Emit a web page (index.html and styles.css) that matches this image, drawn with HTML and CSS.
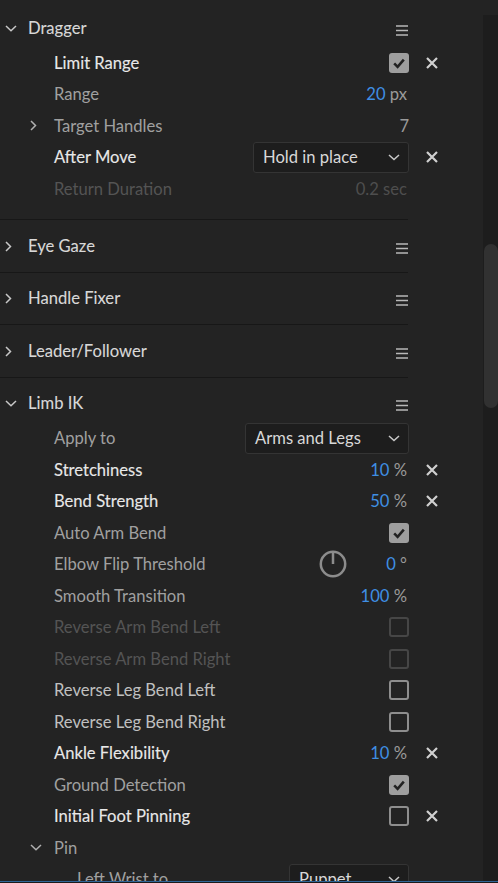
FILE: index.html
```html
<!DOCTYPE html>
<html>
<head>
<meta charset="utf-8">
<title>Properties</title>
<link rel="stylesheet" href="styles.css">
</head>
<body>
<div class="window">
  <div class="content">
    <section class="group open first">
      <div class="ghead">
        <span class="gchev"><svg width="12" height="7" viewBox="0 0 12 7"><path d="M1 1 L6 5.8 L11 1" fill="none" stroke="#c8c8c8" stroke-width="1.5"/></svg></span>
        <span class="gtitle">Dragger</span>
        <span class="menu"><svg width="12" height="11" viewBox="0 0 12 11"><path d="M0 1 H12 M0 5.5 H12 M0 10 H12" stroke="#b8b8b8" stroke-width="1.5"/></svg></span>
      </div>
      <div class="row"><span class="rchev"></span><span class="label bright">Limit Range</span><span class="ctl"><span class="cb checked"><svg width="20" height="20" viewBox="0 0 20 20"><path d="M5.2 10.4 L8.6 13.8 L14.8 6.6" fill="none" stroke="#222" stroke-width="2.6"/></svg></span></span><span class="x"><svg width="12" height="12" viewBox="0 0 12 12"><path d="M1 1 L11 11 M11 1 L1 11" stroke="#d0d0d0" stroke-width="2.2"/></svg></span></div>
      <div class="row"><span class="rchev"></span><span class="label mid">Range</span><span class="ctl"><span class="val"><b>20</b> px</span></span><span class="x"></span></div>
      <div class="row"><span class="rchev"><svg width="7" height="11" viewBox="0 0 7 11"><path d="M1 1 L5.5 5.5 L1 10" fill="none" stroke="#b0b0b0" stroke-width="1.5"/></svg></span><span class="label mid">Target Handles</span><span class="ctl"><span class="val plain">7</span></span><span class="x"></span></div>
      <div class="row"><span class="rchev"></span><span class="label bright">After Move</span><span class="ctl"><span class="dd w156"><span>Hold in place</span><svg width="12" height="7" viewBox="0 0 12 7"><path d="M1 1 L6 5.6 L11 1" fill="none" stroke="#c8c8c8" stroke-width="1.5"/></svg></span></span><span class="x"><svg width="12" height="12" viewBox="0 0 12 12"><path d="M1 1 L11 11 M11 1 L1 11" stroke="#d0d0d0" stroke-width="2.2"/></svg></span></div>
      <div class="row"><span class="rchev"></span><span class="label off">Return Duration</span><span class="ctl"><span class="val off">0.2 sec</span></span><span class="x"></span></div>
    </section>
    <div class="sep"></div>

    <section class="group">
      <div class="ghead">
        <span class="gchev"><svg width="7" height="11" viewBox="0 0 7 11"><path d="M1 1 L5.5 5.5 L1 10" fill="none" stroke="#c8c8c8" stroke-width="1.5"/></svg></span>
        <span class="gtitle">Eye Gaze</span>
        <span class="menu"><svg width="12" height="11" viewBox="0 0 12 11"><path d="M0 1 H12 M0 5.5 H12 M0 10 H12" stroke="#b8b8b8" stroke-width="1.5"/></svg></span>
      </div>
    </section>
    <div class="sep"></div>

    <section class="group">
      <div class="ghead">
        <span class="gchev"><svg width="7" height="11" viewBox="0 0 7 11"><path d="M1 1 L5.5 5.5 L1 10" fill="none" stroke="#c8c8c8" stroke-width="1.5"/></svg></span>
        <span class="gtitle">Handle Fixer</span>
        <span class="menu"><svg width="12" height="11" viewBox="0 0 12 11"><path d="M0 1 H12 M0 5.5 H12 M0 10 H12" stroke="#b8b8b8" stroke-width="1.5"/></svg></span>
      </div>
    </section>
    <div class="sep"></div>

    <section class="group">
      <div class="ghead">
        <span class="gchev"><svg width="7" height="11" viewBox="0 0 7 11"><path d="M1 1 L5.5 5.5 L1 10" fill="none" stroke="#c8c8c8" stroke-width="1.5"/></svg></span>
        <span class="gtitle">Leader/Follower</span>
        <span class="menu"><svg width="12" height="11" viewBox="0 0 12 11"><path d="M0 1 H12 M0 5.5 H12 M0 10 H12" stroke="#b8b8b8" stroke-width="1.5"/></svg></span>
      </div>
    </section>
    <div class="sep"></div>

    <section class="group open">
      <div class="ghead">
        <span class="gchev"><svg width="12" height="7" viewBox="0 0 12 7"><path d="M1 1 L6 5.8 L11 1" fill="none" stroke="#c8c8c8" stroke-width="1.5"/></svg></span>
        <span class="gtitle">Limb IK</span>
        <span class="menu"><svg width="12" height="11" viewBox="0 0 12 11"><path d="M0 1 H12 M0 5.5 H12 M0 10 H12" stroke="#b8b8b8" stroke-width="1.5"/></svg></span>
      </div>
      <div class="row"><span class="rchev"></span><span class="label mid">Apply to</span><span class="ctl"><span class="dd w164"><span>Arms and Legs</span><svg width="12" height="7" viewBox="0 0 12 7"><path d="M1 1 L6 5.6 L11 1" fill="none" stroke="#c8c8c8" stroke-width="1.5"/></svg></span></span><span class="x"></span></div>
      <div class="row"><span class="rchev"></span><span class="label bright">Stretchiness</span><span class="ctl"><span class="val"><b>10</b> %</span></span><span class="x"><svg width="12" height="12" viewBox="0 0 12 12"><path d="M1 1 L11 11 M11 1 L1 11" stroke="#d0d0d0" stroke-width="2.2"/></svg></span></div>
      <div class="row"><span class="rchev"></span><span class="label bright">Bend Strength</span><span class="ctl"><span class="val"><b>50</b> %</span></span><span class="x"><svg width="12" height="12" viewBox="0 0 12 12"><path d="M1 1 L11 11 M11 1 L1 11" stroke="#d0d0d0" stroke-width="2.2"/></svg></span></div>
      <div class="row"><span class="rchev"></span><span class="label mid">Auto Arm Bend</span><span class="ctl"><span class="cb checked"><svg width="20" height="20" viewBox="0 0 20 20"><path d="M5.2 10.4 L8.6 13.8 L14.8 6.6" fill="none" stroke="#222" stroke-width="2.6"/></svg></span></span><span class="x"></span></div>
      <div class="row"><span class="rchev"></span><span class="label mid">Elbow Flip Threshold</span><span class="ctl"><span class="dial"><svg width="28" height="28" viewBox="0 0 28 28"><circle cx="14" cy="14" r="12.2" fill="none" stroke="#8c8c8c" stroke-width="2.5"/><path d="M14 14 V3" stroke="#8c8c8c" stroke-width="2.5"/></svg></span><span class="val wide"><b>0</b> °</span></span><span class="x"></span></div>
      <div class="row"><span class="rchev"></span><span class="label mid">Smooth Transition</span><span class="ctl"><span class="val"><b>100</b> %</span></span><span class="x"></span></div>
      <div class="row"><span class="rchev"></span><span class="label off">Reverse Arm Bend Left</span><span class="ctl"><span class="cb dis"></span></span><span class="x"></span></div>
      <div class="row"><span class="rchev"></span><span class="label off">Reverse Arm Bend Right</span><span class="ctl"><span class="cb dis"></span></span><span class="x"></span></div>
      <div class="row"><span class="rchev"></span><span class="label lite">Reverse Leg Bend Left</span><span class="ctl"><span class="cb"></span></span><span class="x"></span></div>
      <div class="row"><span class="rchev"></span><span class="label lite">Reverse Leg Bend Right</span><span class="ctl"><span class="cb"></span></span><span class="x"></span></div>
      <div class="row"><span class="rchev"></span><span class="label bright">Ankle Flexibility</span><span class="ctl"><span class="val"><b>10</b> %</span></span><span class="x"><svg width="12" height="12" viewBox="0 0 12 12"><path d="M1 1 L11 11 M11 1 L1 11" stroke="#d0d0d0" stroke-width="2.2"/></svg></span></div>
      <div class="row"><span class="rchev"></span><span class="label mid">Ground Detection</span><span class="ctl"><span class="cb checked"><svg width="20" height="20" viewBox="0 0 20 20"><path d="M5.2 10.4 L8.6 13.8 L14.8 6.6" fill="none" stroke="#222" stroke-width="2.6"/></svg></span></span><span class="x"></span></div>
      <div class="row"><span class="rchev"></span><span class="label bright">Initial Foot Pinning</span><span class="ctl"><span class="cb"></span></span><span class="x"><svg width="12" height="12" viewBox="0 0 12 12"><path d="M1 1 L11 11 M11 1 L1 11" stroke="#d0d0d0" stroke-width="2.2"/></svg></span></div>
      <div class="row"><span class="rchev"><svg width="12" height="7" viewBox="0 0 12 7"><path d="M1 1 L6 5.8 L11 1" fill="none" stroke="#b0b0b0" stroke-width="1.5"/></svg></span><span class="label mid">Pin</span><span class="ctl"></span><span class="x"></span></div>
      <div class="row nested"><span class="rchev"></span><span class="label mid">Left Wrist to</span><span class="ctl"><span class="dd w120"><span>Puppet</span><svg width="12" height="7" viewBox="0 0 12 7"><path d="M1 1 L6 5.6 L11 1" fill="none" stroke="#c8c8c8" stroke-width="1.5"/></svg></span></span><span class="x"></span></div>
    </section>
  </div>
  <div class="track"><div class="thumb"></div></div>
</div>
<div class="edge"></div>
<div class="edge-under"></div>
</body>
</html>
```

FILE: styles.css
```css
* { box-sizing: border-box; }
html, body {
  margin: 0;
  padding: 0;
  background: #232323;
}
body {
  width: 498px;
  height: 883px;
  overflow: hidden;
  font-family: Lato, "Open Sans", sans-serif;
  font-size: 16.6px;
  color: #d6d6d6;
}
.window {
  display: flex;
  height: 881px;
  overflow: hidden;
}
.content {
  flex: 0 0 483px;
  padding-top: 2px;
}
.track {
  flex: 0 0 15px;
  margin-top: 15px;
  background: #1d1d1d;
  padding-left: 1px;
}
.thumb {
  margin-top: 229px;
  height: 164px;
  background: #313131;
  border-radius: 7px;
}
.edge {
  height: 1px;
  background: #2f6596;
}
.edge-under {
  height: 1px;
  background: #1b1b1b;
}

.group { padding-bottom: 6.5px; }
.group.open.first { padding-bottom: 14.5px; }
.sep {
  width: 408px;
  height: 1px;
  background: #171717;
}
.ghead {
  height: 45px;
  padding-top: 6px;
  padding-right: 75px;
  display: flex;
  align-items: center;
}
.gchev {
  flex: 0 0 28px;
  padding-left: 5px;
  display: flex;
  align-items: center;
  margin-top: 1px;
}
.gchev svg { display: block; }
.gtitle {
  flex: 1;
  color: #d8d8d8;
  -webkit-text-stroke: 0.1px #d8d8d8;
}
.menu {
  display: flex;
  margin-top: 5px;
}
.menu svg { display: block; }

.row {
  height: 31.5px;
  display: grid;
  grid-template-columns: 26px 1fr auto 46px;
  align-items: center;
  padding-left: 28px;
  padding-right: 28px;
}
.row.nested { padding-left: 51px; }
.rchev {
  display: flex;
  align-items: center;
  padding-left: 2px;
}
.rchev svg { display: block; }
.label {
  white-space: nowrap;
}
.label.bright {
  color: #e8e8e8;
  -webkit-text-stroke: 0.12px #e8e8e8;
}
.label.mid { color: #a0a0a0; }
.label.lite { color: #c0c0c0; }
.label.off { color: #545454; }

.ctl {
  display: flex;
  align-items: center;
  justify-content: flex-end;
}
.x {
  display: flex;
  justify-content: center;
  align-items: center;
}
.x svg { display: block; }

.val {
  color: #9a9a9a;
  padding-right: 2px;
  white-space: nowrap;
}
.val b {
  font-weight: 400;
  color: #3f8fe4;
}
.val.plain { padding-right: 0; }
.val.off { color: #4e4e4e; }
.val.wide {
  min-width: 62px;
  text-align: right;
}
.dial { display: flex; }
.dial svg { display: block; }

.cb {
  width: 20px;
  height: 20px;
  border: 2px solid #8e8e8e;
  border-radius: 3px;
  display: block;
}
.cb.dis { border-color: #464646; }
.cb.checked {
  border: none;
  background: #9e9e9e;
}
.cb svg { display: block; }

.dd {
  height: 31px;
  background: #1d1d1d;
  border: 1px solid #343434;
  border-radius: 3px;
  display: flex;
  align-items: center;
  justify-content: space-between;
  padding-left: 9px;
  padding-right: 8px;
  color: #d8d8d8;
}
.dd svg { display: block; }
.w156 { width: 156px; }
.w164 { width: 164px; }
.w120 { width: 120px; }
```
